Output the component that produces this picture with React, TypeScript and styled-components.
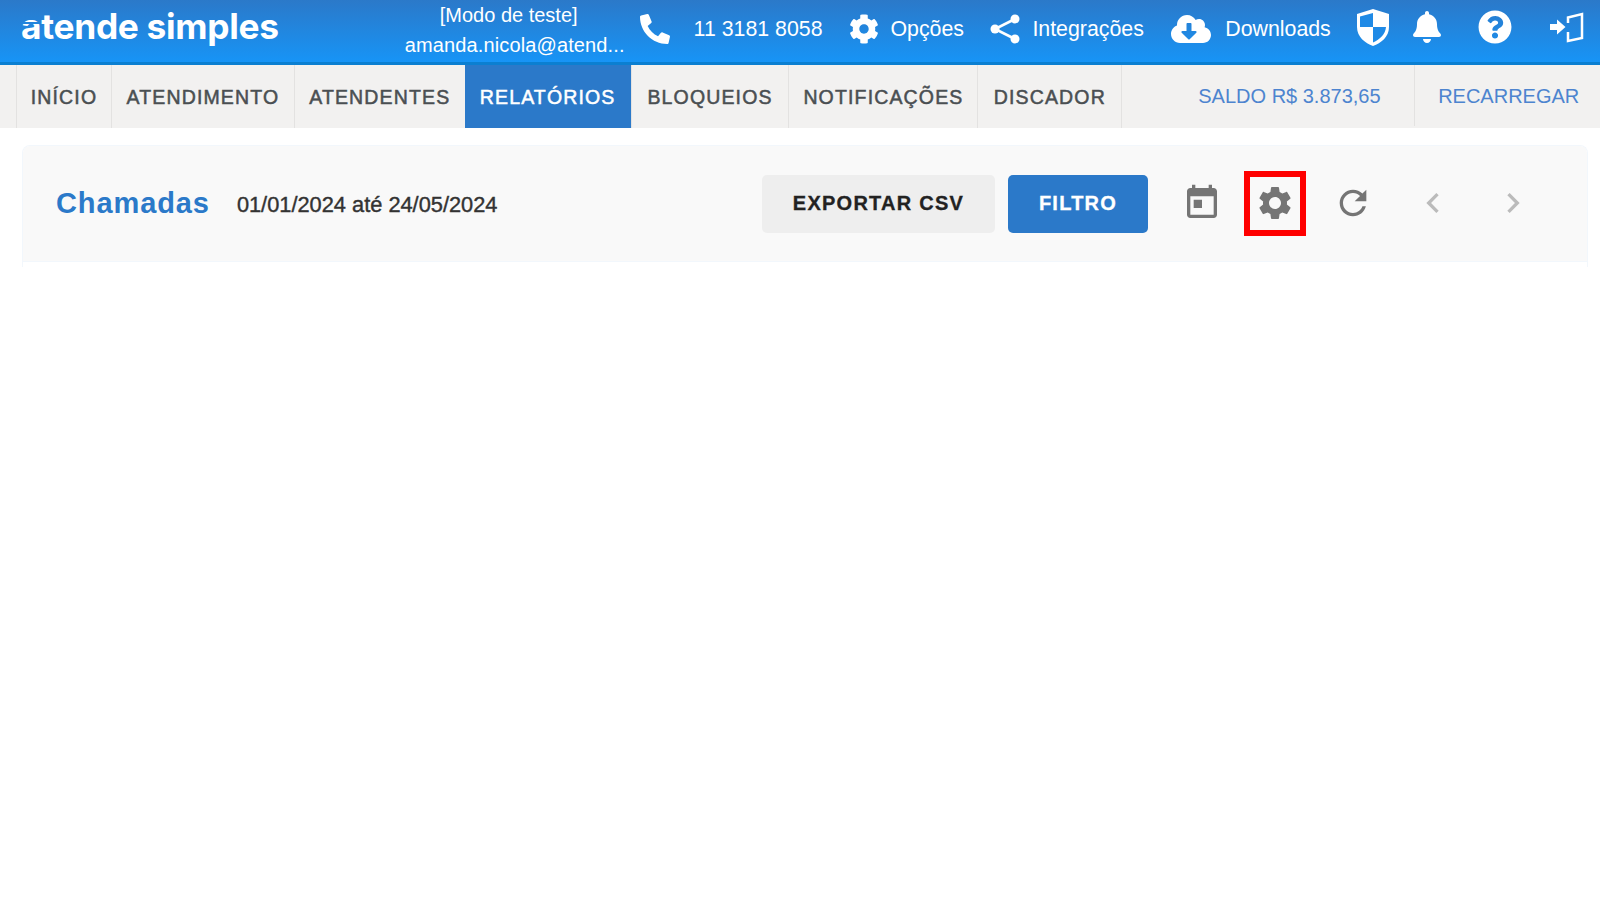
import React from 'react';
import styled, { createGlobalStyle } from 'styled-components';
import { FaPhone, FaCog, FaCloudDownloadAlt, FaBell, FaQuestionCircle } from 'react-icons/fa';

const GlobalStyle = createGlobalStyle`
    html, body {
        margin: 0;
        padding: 0;
        background: #ffffff;
        font-family: "Liberation Sans", Arial, sans-serif;
    }
`;

const Page = styled.div`
    width: 1600px;
    height: 900px;
    overflow: hidden;
    background: #ffffff;
`;

const Header = styled.header`
    box-sizing: border-box;
    height: 65px;
    padding-bottom: 8px;
    display: flex;
    align-items: center;
    background: linear-gradient(180deg, #2b79c9 0%, #1794f6 100%);
    border-bottom: 3px solid #0b7fd1;
    color: #ffffff;
    font-size: 21.33px;
`;

const Logo = styled.div`
    width: 402px;
    padding-left: 21px;
    box-sizing: border-box;
    font-family: Inter, sans-serif;
    font-weight: 700;
    font-size: 35.3px;
    letter-spacing: -0.3px;
    line-height: 56px;
`;

// the logo's first letter has a thin cut through it
const LogoInitial = styled.span`
    position: relative;
    &::after {
        content: '';
        position: absolute;
        left: 0;
        right: 0;
        top: 17px;
        height: 2px;
        background: #2284dc;
    }
`;

const Account = styled.div`
    width: 226px;
    text-align: center;
    font-size: 20px;
    line-height: 30px;
    margin-top: 6px;
`;

const AccountLine = styled.div<{ $shift?: number }>`
    padding-right: ${p => p.$shift ?? 0}px;
    letter-spacing: ${p => (p.$shift ? '0' : '0.13px')};
    overflow: hidden;
    white-space: nowrap;
    text-overflow: ellipsis;
`;

const HeaderItem = styled.div<{ $width: number; $gap: number; $pad?: number }>`
    box-sizing: border-box;
    width: ${p => p.$width}px;
    margin-top: 4px;
    padding-left: ${p => p.$pad ?? 0}px;
    display: flex;
    align-items: center;
    gap: ${p => p.$gap}px;
    white-space: nowrap;
    height: 56px;
`;

const HeaderIcon = styled.div<{ $width: number }>`
    width: ${p => p.$width}px;
    display: flex;
    justify-content: center;
    align-items: center;
    height: 56px;
`;

const Nav = styled.nav`
    height: 63px;
    display: flex;
    padding-left: 16px;
    background: #f2f1f0;
`;

const Tab = styled.div<{ $width: number; $active?: boolean }>`
    width: ${p => p.$width}px;
    box-sizing: border-box;
    padding-top: 2px;
    display: flex;
    align-items: center;
    justify-content: center;
    border-left: ${p => (p.$active ? 'none' : '1px solid #e3e2e1')};
    background: ${p => (p.$active ? '#2b79c9' : 'transparent')};
    color: ${p => (p.$active ? '#ffffff' : '#4a4f52')};
    font-size: 19.5px;
    letter-spacing: 1.15px;
    -webkit-text-stroke: 0.5px ${p => (p.$active ? '#ffffff' : '#4a4f52')};
    white-space: nowrap;
`;

const NavEnd = styled.div`
    border-left: 1px solid #e3e2e1;
`;

const Balance = styled.div<{ $width: number; $pad: number }>`
    width: ${p => p.$width}px;
    box-sizing: border-box;
    padding-left: ${p => p.$pad}px;
    display: flex;
    align-items: center;
    height: 62px;
    color: #4d84cf;
    font-size: 20px;
    white-space: nowrap;
`;

const BalanceDivider = styled.div`
    border-left: 1px solid #e3e2e1;
    height: 61px;
`;

const Content = styled.main`
    padding: 17px 12px 0 22px;
`;

const Card = styled.section`
    box-sizing: border-box;
    height: 122px;
    border: 1px solid #f2f7fc;
    border-bottom: none;
    border-top-left-radius: 8px;
    border-top-right-radius: 8px;
    overflow: hidden;
`;

const Toolbar = styled.div`
    box-sizing: border-box;
    height: 116px;
    display: flex;
    align-items: center;
    padding: 0 54px 0 33px;
    background: #f9f9f9;
    border-bottom: 1px solid #f2f7fc;
`;

const Title = styled.h1`
    margin: 0 27px 0 0;
    color: #2b79c9;
    font-size: 29px;
    font-weight: 700;
    letter-spacing: 0.9px;
`;

const Period = styled.span`
    color: #333333;
    font-size: 21.8px;
    margin-top: 3px;
    flex: 1;
    -webkit-text-stroke: 0.4px #333333;
`;

const Button = styled.button<{ $primary?: boolean }>`
    height: 58px;
    border: none;
    border-radius: 5px;
    padding: 0;
    width: ${p => (p.$primary ? '140px' : '233px')};
    margin-right: ${p => (p.$primary ? '34px' : '13px')};
    background: ${p => (p.$primary ? '#2b79c9' : '#eeeeee')};
    color: ${p => (p.$primary ? '#ffffff' : '#222222')};
    font-family: "Liberation Sans", Arial, sans-serif;
    font-weight: 700;
    font-size: 20px;
    letter-spacing: 1.25px;
    -webkit-text-stroke: 0.3px currentColor;
`;

const ToolIcon = styled.div<{ $muted?: boolean; $spaced?: boolean }>`
    width: 40px;
    height: 40px;
    margin-left: ${p => (p.$spaced ? '40px' : '0')};
    margin-bottom: 2px;
    color: ${p => (p.$muted ? '#bbbbbb' : '#757575')};
    svg {
        display: block;
        fill: currentColor;
    }
`;

const Highlighted = styled.div`
    box-sizing: border-box;
    width: 62px;
    height: 65px;
    margin: 0 27px 0 22px;
    padding-right: 1px;
    padding-bottom: 2px;
    border: 6px solid #ff0000;
    display: flex;
    align-items: center;
    justify-content: center;
    color: #757575;
    svg {
        display: block;
        fill: currentColor;
    }
`;

function MaterialIcon({ d }: { d: string }) {
    return (
        <svg width="40" height="40" viewBox="0 0 24 24">
            <path d={d} />
        </svg>
    );
}

function ShareIcon() {
    return (
        <svg width="30" height="30" viewBox="0 0 30 30" fill="#ffffff" stroke="#ffffff">
            <path d="M25 5 L5 15 L25 25" fill="none" strokeWidth="2.6" />
            <circle cx="25" cy="5" r="4.5" stroke="none" />
            <circle cx="5" cy="15" r="4.5" stroke="none" />
            <circle cx="25" cy="25" r="4.5" stroke="none" />
        </svg>
    );
}

function ShieldIcon() {
    return (
        <svg width="32" height="37" viewBox="0 0 32 37">
            <path fill="#ffffff" d="M16 0 L32 5 V18 C32 28 24 34 16 37 C8 34 0 28 0 18 V5 Z" />
            <path fill="#1f8ae6" d="M16 4 V18 H3 V7.500 Z" />
            <path fill="#1f8ae6" d="M16 18 H29 C28.500 25 23 30.500 16 33.500 Z" />
        </svg>
    );
}

function LoginIcon() {
    return (
        <svg width="34" height="31" viewBox="0 0 34 31">
            <path fill="#ffffff" d="M0 12 H7 V7.500 L15.500 15 L7 22.500 V18 H0 Z" />
            <path fill="none" stroke="#ffffff" strokeWidth="2.5" d="M18 11 V5.500 L32 2 V26 L18 29 V20" />
        </svg>
    );
}

const tabs = [
    { label: 'INÍCIO', width: 95 },
    { label: 'ATENDIMENTO', width: 183 },
    { label: 'ATENDENTES', width: 171 },
    { label: 'RELATÓRIOS', width: 166, active: true },
    { label: 'BLOQUEIOS', width: 158 },
    { label: 'NOTIFICAÇÕES', width: 189 },
    { label: 'DISCADOR', width: 144 },
];

const CALENDAR = 'M19 3h-1V1h-2v2H8V1H6v2H5c-1.110 0-1.990.9-1.990 2L3 19c0 1.100.89 2 2 2h14c1.100 0 2-.9 2-2V5c0-1.100-.9-2-2-2zm0 16H5V8h14v11zM7 10h5v5H7z';
const GEAR = 'M19.140 12.940c.04-.3.06-.61.06-.94 0-.32-.02-.64-.07-.94l2.030-1.580c.18-.14.23-.41.12-.61l-1.920-3.320c-.12-.22-.37-.29-.59-.22l-2.390.96c-.5-.38-1.030-.7-1.620-.94l-.36-2.540c-.04-.24-.24-.41-.48-.41h-3.840c-.24 0-.43.17-.47.41l-.36 2.540c-.59.24-1.130.57-1.620.94l-2.390-.96c-.22-.08-.47 0-.59.22L2.740 8.870c-.12.21-.08.47.12.61l2.030 1.580c-.05.3-.09.63-.09.94s.02.64.07.94l-2.030 1.580c-.18.14-.23.41-.12.61l1.920 3.320c.12.22.37.29.59.22l2.390-.96c.5.38 1.030.7 1.620.94l.36 2.540c.05.24.24.41.48.41h3.840c.24 0 .44-.17.47-.41l.36-2.540c.59-.24 1.130-.56 1.620-.94l2.390.96c.22.08.47 0 .59-.22l1.920-3.320c.12-.22.07-.47-.12-.61l-2.010-1.580zM12 15.600c-1.980 0-3.600-1.620-3.600-3.600s1.620-3.600 3.600-3.600 3.600 1.620 3.600 3.600-1.620 3.600-3.600 3.600z';
const REFRESH = 'M17.650 6.350C16.200 4.900 14.210 4 12 4c-4.420 0-7.990 3.580-7.990 8s3.570 8 7.990 8c3.730 0 6.840-2.550 7.730-6h-2.080c-.82 2.330-3.040 4-5.650 4-3.310 0-6-2.690-6-6s2.690-6 6-6c1.660 0 3.140.69 4.220 1.780L13 11h7V4l-2.350 2.350z';
const CHEVRON_LEFT = 'M15.410 7.410 14 6l-6 6 6 6 1.410-1.410L10.830 12z';
const CHEVRON_RIGHT = 'M10 6 8.590 7.410 13.170 12l-4.580 4.590L10 18l6-6z';

export default function App() {
    return (
        <Page>
            <GlobalStyle />
            <Header>
                <Logo><LogoInitial>a</LogoInitial>tende simples</Logo>
                <Account>
                    <AccountLine $shift={12}>[Modo de teste]</AccountLine>
                    <AccountLine>amanda.nicola@atend...</AccountLine>
                </Account>
                <HeaderItem $width={222} $gap={24} $pad={12}>
                    <FaPhone size={30} style={{ transform: 'scaleX(-1)' }} />
                    <span>11 3181 8058</span>
                </HeaderItem>
                <HeaderItem $width={141} $gap={11}>
                    <FaCog size={30} />
                    <span>Opções</span>
                </HeaderItem>
                <HeaderItem $width={181} $gap={12}>
                    <ShareIcon />
                    <span>Integrações</span>
                </HeaderItem>
                <HeaderItem $width={179} $gap={14}>
                    <FaCloudDownloadAlt size={40} />
                    <span>Downloads</span>
                </HeaderItem>
                <HeaderIcon $width={46}><ShieldIcon /></HeaderIcon>
                <HeaderIcon $width={61}><FaBell size={32} /></HeaderIcon>
                <HeaderIcon $width={76}><FaQuestionCircle size={34} /></HeaderIcon>
                <HeaderIcon $width={67}><LoginIcon /></HeaderIcon>
            </Header>
            <Nav>
                {tabs.map(tab => (
                    <Tab key={tab.label} $width={tab.width} $active={tab.active}>{tab.label}</Tab>
                ))}
                <NavEnd />
                <Balance $width={292} $pad={76}>SALDO R$ 3.873,65</Balance>
                <BalanceDivider />
                <Balance $width={185} $pad={23}>RECARREGAR</Balance>
            </Nav>
            <Content>
                <Card>
                    <Toolbar>
                        <Title>Chamadas</Title>
                        <Period>01/01/2024 até 24/05/2024</Period>
                        <Button>EXPORTAR CSV</Button>
                        <Button $primary>FILTRO</Button>
                        <ToolIcon><MaterialIcon d={CALENDAR} /></ToolIcon>
                        <Highlighted><MaterialIcon d={GEAR} /></Highlighted>
                        <ToolIcon><MaterialIcon d={REFRESH} /></ToolIcon>
                        <ToolIcon $muted $spaced><MaterialIcon d={CHEVRON_LEFT} /></ToolIcon>
                        <ToolIcon $muted $spaced><MaterialIcon d={CHEVRON_RIGHT} /></ToolIcon>
                    </Toolbar>
                </Card>
            </Content>
        </Page>
    );
}
